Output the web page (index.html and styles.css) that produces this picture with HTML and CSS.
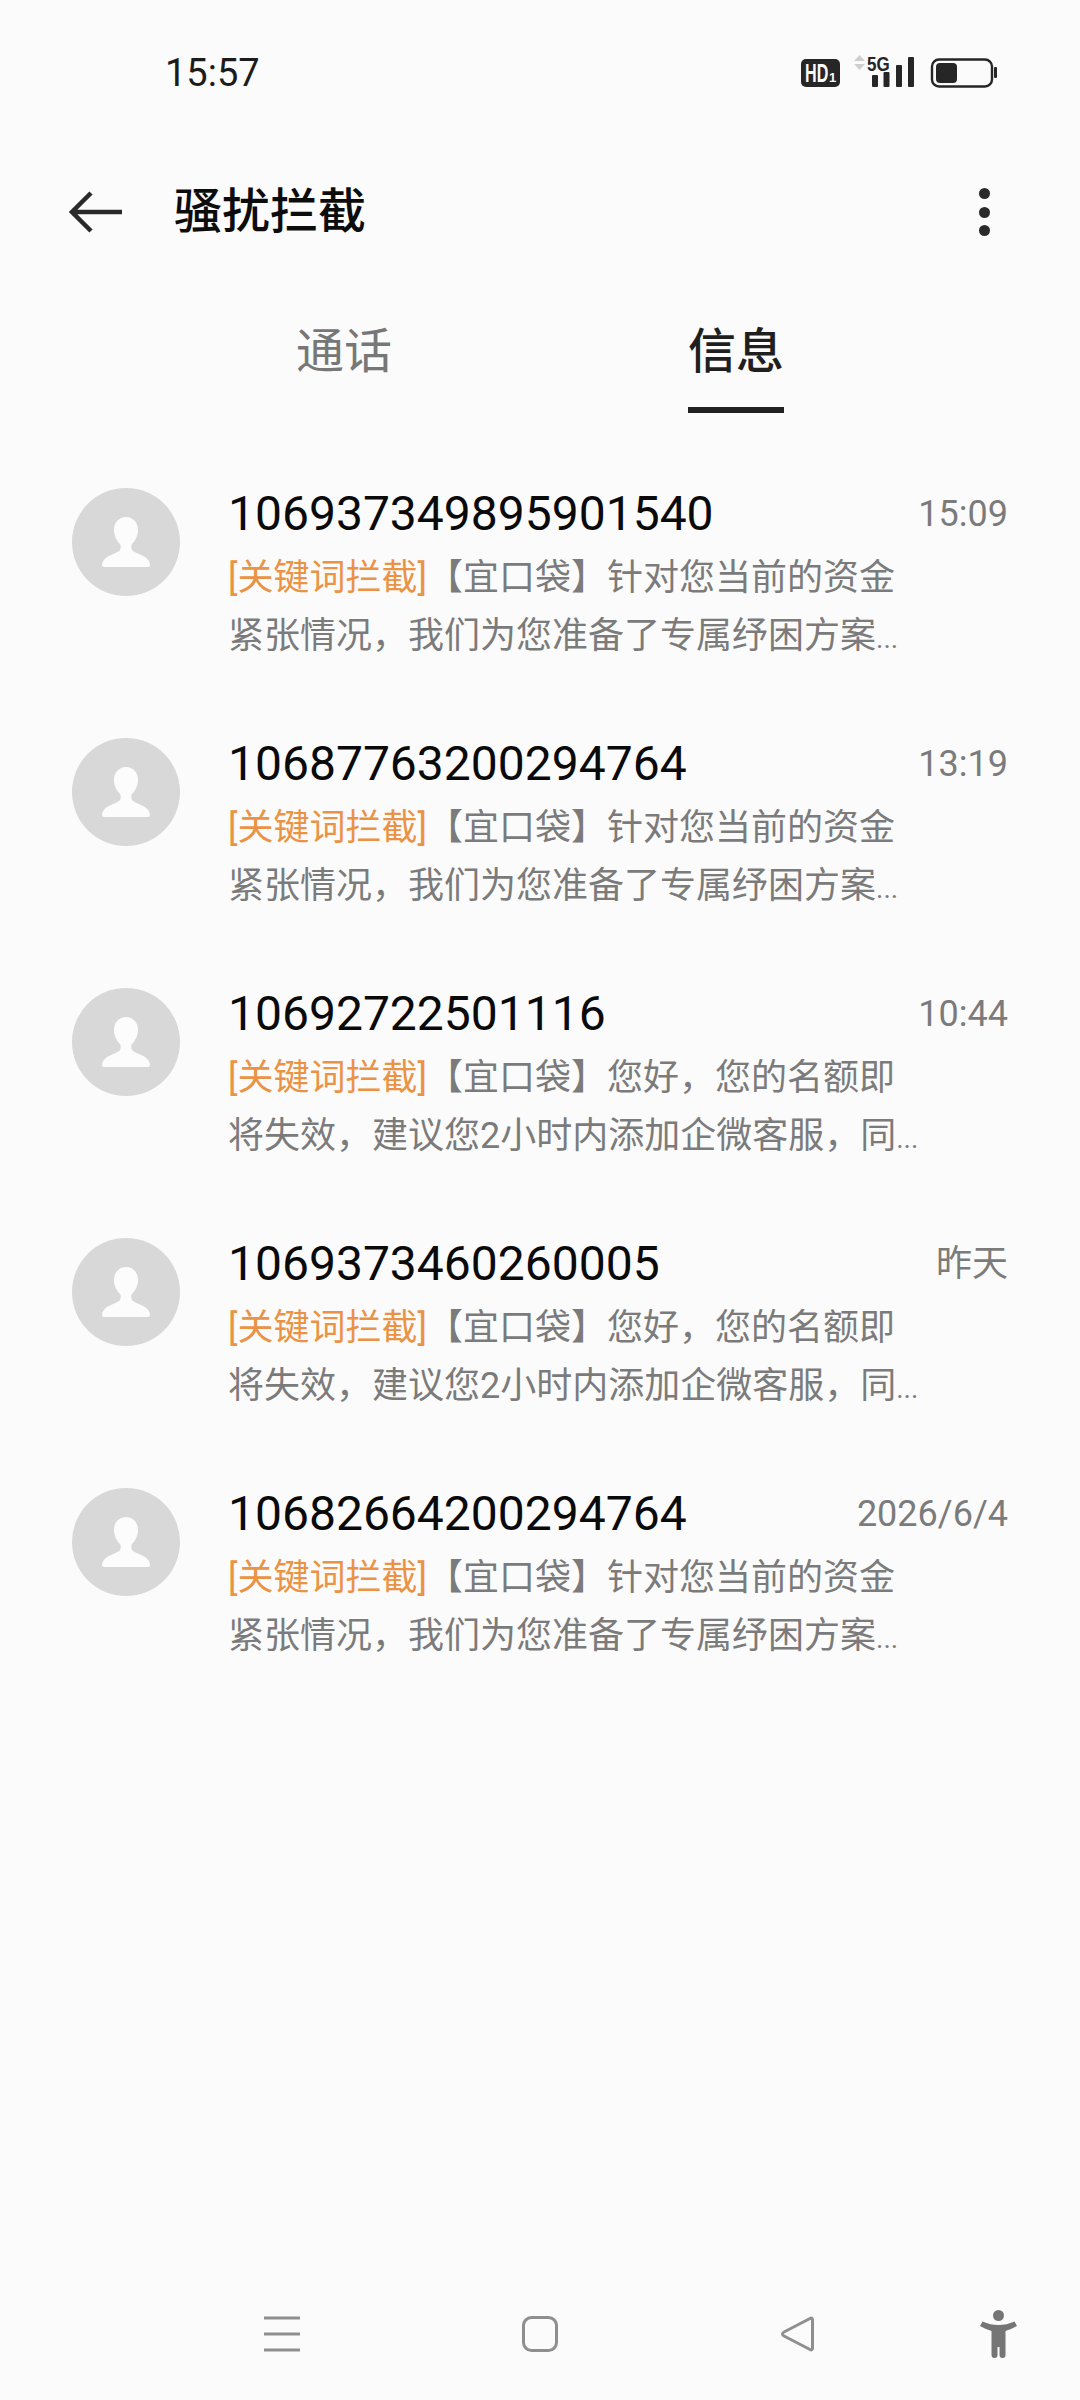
FILE: index.html
```html
<!DOCTYPE html>
<html lang="zh">
<head>
<meta charset="utf-8">
<title>骚扰拦截</title>
<link rel="stylesheet" href="styles.css">
</head>
<body>
<div class="screen">
  <div class="status">
    <span class="clock">15:57</span>
    <svg class="status-icons" width="200" height="40" viewBox="0 0 200 40">
      <rect x="1" y="9" width="39" height="28" rx="5" fill="#262626"/>
      <text transform="translate(5 32) scale(.62 1)" class="hd">HD</text>
      <text x="29" y="32" class="hd1">1</text>
      <path d="M54 11l5.500-6 5.500 6zM54 14l5.500 6 5.500-6z" fill="#cfcfcf"/>
      <text transform="translate(67 21) scale(.85 1)" class="fiveg">5G</text>
      <rect x="72" y="25" width="6" height="12" rx="1" fill="#262626"/>
      <rect x="83.500" y="22" width="6" height="15" rx="1" fill="#262626"/>
      <rect x="96" y="15" width="6" height="22" rx="1" fill="#262626"/>
      <rect x="108" y="7" width="6" height="30" rx="1" fill="#262626"/>
      <rect x="132" y="9.500" width="60" height="27" rx="7" fill="none" stroke="#262626" stroke-width="2.400"/>
      <rect x="136" y="13" width="21" height="20" rx="4" fill="#262626"/>
      <rect x="194" y="17" width="3" height="11" rx="1" fill="#262626"/>
    </svg>
  </div>

  <header class="topbar">
    <svg class="back" width="54" height="42" viewBox="0 0 54 42"><path d="M53 21H3M22 2L3 21l19 19" fill="none" stroke="#2a2a2a" stroke-width="4.500"/></svg>
    <h1 class="title">骚扰拦截</h1>
    <div class="kebab"><i></i><i></i><i></i></div>
  </header>

  <nav class="tabs">
    <div class="tab">通话</div>
    <div class="tab tab-active">信息</div>
  </nav>

  <ul class="list">
    <li class="row">
      <div class="avatar"><svg width="48" height="50" viewBox="0 0 48 50"><path d="M24 0c-7 0-12 5.500-12 13 0 6 3 11 6 14 1 1 1 4 0 6-1 2-8 4-13 7-3 2-5 5-5 8 0 1 1 2 2 2h44c1 0 2-1 2-2 0-3-2-6-5-8-5-3-12-5-13-7-1-2-1-5 0-6 3-3 6-8 6-14 0-7.500-5-13-12-13z" fill="#fcfcfc"/></svg></div>
      <div class="body">
        <div class="head"><span class="num">106937349895901540</span><span class="time">15:09</span></div>
        <div class="line"><span class="tag">[关键词拦截]</span>【宜口袋】针对您当前的资金</div>
        <div class="line">紧张情况，我们为您准备了专属纾困方案<span class="dots">...</span></div>
      </div>
    </li>
    <li class="row">
      <div class="avatar"><svg width="48" height="50" viewBox="0 0 48 50"><path d="M24 0c-7 0-12 5.500-12 13 0 6 3 11 6 14 1 1 1 4 0 6-1 2-8 4-13 7-3 2-5 5-5 8 0 1 1 2 2 2h44c1 0 2-1 2-2 0-3-2-6-5-8-5-3-12-5-13-7-1-2-1-5 0-6 3-3 6-8 6-14 0-7.500-5-13-12-13z" fill="#fcfcfc"/></svg></div>
      <div class="body">
        <div class="head"><span class="num">10687763200294764</span><span class="time">13:19</span></div>
        <div class="line"><span class="tag">[关键词拦截]</span>【宜口袋】针对您当前的资金</div>
        <div class="line">紧张情况，我们为您准备了专属纾困方案<span class="dots">...</span></div>
      </div>
    </li>
    <li class="row">
      <div class="avatar"><svg width="48" height="50" viewBox="0 0 48 50"><path d="M24 0c-7 0-12 5.500-12 13 0 6 3 11 6 14 1 1 1 4 0 6-1 2-8 4-13 7-3 2-5 5-5 8 0 1 1 2 2 2h44c1 0 2-1 2-2 0-3-2-6-5-8-5-3-12-5-13-7-1-2-1-5 0-6 3-3 6-8 6-14 0-7.500-5-13-12-13z" fill="#fcfcfc"/></svg></div>
      <div class="body">
        <div class="head"><span class="num">10692722501116</span><span class="time">10:44</span></div>
        <div class="line"><span class="tag">[关键词拦截]</span>【宜口袋】您好，您的名额即</div>
        <div class="line">将失效，建议您2小时内添加企微客服，同<span class="dots">...</span></div>
      </div>
    </li>
    <li class="row">
      <div class="avatar"><svg width="48" height="50" viewBox="0 0 48 50"><path d="M24 0c-7 0-12 5.500-12 13 0 6 3 11 6 14 1 1 1 4 0 6-1 2-8 4-13 7-3 2-5 5-5 8 0 1 1 2 2 2h44c1 0 2-1 2-2 0-3-2-6-5-8-5-3-12-5-13-7-1-2-1-5 0-6 3-3 6-8 6-14 0-7.500-5-13-12-13z" fill="#fcfcfc"/></svg></div>
      <div class="body">
        <div class="head"><span class="num">1069373460260005</span><span class="time">昨天</span></div>
        <div class="line"><span class="tag">[关键词拦截]</span>【宜口袋】您好，您的名额即</div>
        <div class="line">将失效，建议您2小时内添加企微客服，同<span class="dots">...</span></div>
      </div>
    </li>
    <li class="row">
      <div class="avatar"><svg width="48" height="50" viewBox="0 0 48 50"><path d="M24 0c-7 0-12 5.500-12 13 0 6 3 11 6 14 1 1 1 4 0 6-1 2-8 4-13 7-3 2-5 5-5 8 0 1 1 2 2 2h44c1 0 2-1 2-2 0-3-2-6-5-8-5-3-12-5-13-7-1-2-1-5 0-6 3-3 6-8 6-14 0-7.500-5-13-12-13z" fill="#fcfcfc"/></svg></div>
      <div class="body">
        <div class="head"><span class="num">10682664200294764</span><span class="time">2026/6/4</span></div>
        <div class="line"><span class="tag">[关键词拦截]</span>【宜口袋】针对您当前的资金</div>
        <div class="line">紧张情况，我们为您准备了专属纾困方案<span class="dots">...</span></div>
      </div>
    </li>
  </ul>

  <footer class="navbar">
    <svg width="38" height="38" viewBox="0 0 38 38"><path d="M1 2h36M1 18h36M1 34h36" stroke="#8f8f8f" stroke-width="3"/></svg>
    <svg width="38" height="38" viewBox="0 0 38 38"><rect x="2.500" y="1.500" width="33" height="33" rx="8" fill="none" stroke="#8f8f8f" stroke-width="3"/></svg>
    <svg width="38" height="38" viewBox="0 0 38 38"><path d="M31 2.500c1.500-.9 2.500 0 2.500 1.500v28c0 1.500-1 2.400-2.500 1.500L5 20c-2-1-2-3 0-4z" fill="none" stroke="#8f8f8f" stroke-width="3"/></svg>
    <svg class="person" width="38" height="48" viewBox="0 0 38 48"><circle cx="18.500" cy="5.500" r="5.500" fill="#757575"/><path d="M2.500 11.500C8 14 13 15 18.500 15S29 14 34.500 11.500L37 16c-4 2-8 4-11.500 5v24a3 3 0 0 1-6 0v-8h-2v8a3 3 0 0 1-6 0V21C8 20 4 18 0 16z" fill="#757575"/></svg>
  </footer>
</div>
</body>
</html>
```
FILE: styles.css
```css
* { box-sizing: border-box; }
html, body { margin: 0; padding: 0; }
body {
  background: #fbfbfb;
  font-family: Roboto, "Noto Sans CJK SC", sans-serif;
}
.screen {
  width: 1080px;
  height: 2400px;
  display: flex;
  flex-direction: column;
  background: #fbfbfb;
}
.status {
  height: 144px;
  padding: 50px 80px 0 165px;
  display: flex;
  justify-content: space-between;
  align-items: flex-start;
}
.clock { font-size: 38px; line-height: 46px; color: #1c1c1c; }
.hd { font: 700 26px "Liberation Sans", sans-serif; fill: #fbfbfb; }
.hd1 { font: 700 13px "Liberation Sans", sans-serif; fill: #fbfbfb; }
.fiveg { font: 700 20px "Liberation Sans", sans-serif; fill: #262626; }

.topbar {
  height: 136px;
  display: flex;
  align-items: center;
  padding: 0 0 0 69px;
}
.back { flex: none; }
.title {
  margin: 0 0 0 51px;
  font-size: 48px;
  font-weight: 500;
  color: #0c0c0c;
  line-height: 64px;
  flex: 1;
}
.kebab {
  display: flex;
  flex-direction: column;
  gap: 7.500px;
  margin-right: 90px;
}
.kebab i { width: 11px; height: 11px; border-radius: 50%; background: #2a2a2a; display: block; }

.tabs {
  height: 134px;
  display: flex;
  padding-left: 148px;
}
.tab {
  width: 392px;
  text-align: center;
  font-size: 48px;
  line-height: 64px;
  padding-top: 40px;
  color: #777;
  position: relative;
}
.tab-active { color: #1f1f1f; font-weight: 500; }
.tab-active::after {
  content: "";
  position: absolute;
  left: 148px;
  top: 127px;
  width: 96px;
  height: 6px;
  background: #222;
}

.list {
  list-style: none;
  margin: 0;
  padding: 74px 0 0 72px;
  flex: 1;
}
.row {
  height: 250px;
  display: flex;
}
.avatar {
  width: 108px;
  height: 108px;
  border-radius: 50%;
  background: #d8d8d8;
  flex: none;
  display: flex;
  align-items: center;
  justify-content: center;
}
.body { margin-left: 48px; width: 780px; margin-top: -4px; }
.head {
  display: flex;
  justify-content: space-between;
  align-items: center;
  height: 60px;
  margin-bottom: 5px;
}
.num { font-size: 48px; color: #0a0a0a; line-height: 60px; }
.time { font-size: 36px; color: #7b7b7b; line-height: 60px; }
.line {
  font-size: 36px;
  line-height: 58px;
  color: #7b7b7b;
  white-space: nowrap;
}
.dots { font-size: 28px; }
.tag { color: #ea9345; }

.navbar {
  height: 96px;
  display: flex;
  align-items: flex-start;
  padding-left: 263px;
  position: relative;
}
.navbar svg { flex: none; margin-right: 220px; margin-top: 12px; }
.navbar .person { margin: 0; position: absolute; left: 980px; top: 6px; }
```
